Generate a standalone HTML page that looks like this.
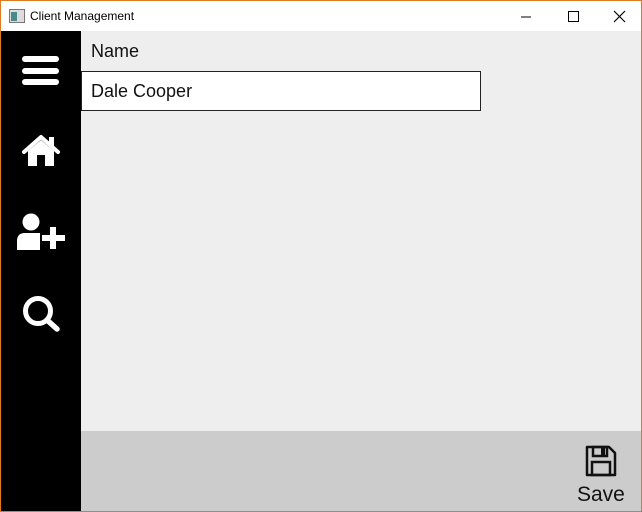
<!DOCTYPE html>
<html><head><style>
html,body{margin:0;padding:0;}
body{width:642px;height:512px;position:relative;overflow:hidden;font-family:"Liberation Sans",sans-serif;background:#eeeeee;}
.win{position:absolute;left:0;top:0;width:640px;height:510px;border:1px solid #e07a1f;}
.title{position:absolute;left:1px;top:1px;width:640px;height:30px;background:#fff;}
.title span{position:absolute;left:29px;top:8px;font-size:12px;color:#000;font-family:"Liberation Sans",sans-serif;}
.side{position:absolute;left:1px;top:31px;width:80px;height:480px;background:#000;}
.bottom{position:absolute;left:81px;top:431px;width:560px;height:80px;background:#cccccc;}
.lbl{position:absolute;left:91px;top:41px;font-size:18px;color:#111;}
.box{position:absolute;left:81px;top:71px;width:398px;height:38px;border:1px solid #222;background:#fff;}
.box span{position:absolute;left:9px;top:9px;font-size:18px;color:#111;}
.save{position:absolute;left:577px;top:483px;font-size:21px;color:#111;}
</style></head><body>
<div class="win"></div>
<div class="title">
<svg style="position:absolute;left:8px;top:8px" width="16" height="14"><rect x="0.5" y="0.5" width="15" height="13" fill="#ddd" stroke="#777"/><rect x="2" y="3" width="6" height="9" fill="#4a8a8a"/></svg>
<span>Client Management</span>
<svg style="position:absolute;left:520px;top:8px" width="110" height="16">
<line x1="0" y1="8" x2="10" y2="8" stroke="#000"/>
<rect x="47.5" y="2.5" width="10" height="10" fill="none" stroke="#000"/>
<path d="M93 2 L104 13 M104 2 L93 13" stroke="#000" stroke-width="1.2"/>
</svg>
</div>
<div class="side">
<svg width="80" height="480" style="position:absolute;left:-1px;top:-31px">
<g fill="#fff">
<rect x="22" y="56" width="37" height="6" rx="3"/>
<rect x="22" y="68" width="37" height="6" rx="3"/>
<rect x="22" y="79" width="37" height="6" rx="3"/>
</g>
<path d="M24 152 L41 137 L58 152" fill="none" stroke="#fff" stroke-width="4" stroke-linecap="round" stroke-linejoin="round"/>
<rect x="49" y="137" width="5" height="10" fill="#fff"/>
<path d="M28 151 L41 140 L54 151 L54 166 L45 166 L45 155 L37 155 L37 166 L28 166 Z" fill="#fff"/>
<circle cx="31" cy="222" r="8.5" fill="#fff"/>
<path d="M17 250 L17 241 Q17 233 25 233 L40 233 Q44 233 45 236 L45 250 Z" fill="#fff"/>
<rect x="40" y="224" width="26" height="27" fill="#000"/>
<rect x="50" y="227" width="6" height="22" fill="#fff"/>
<rect x="42" y="235" width="23" height="6" fill="#fff"/>
<circle cx="38" cy="311" r="12.5" fill="none" stroke="#fff" stroke-width="5"/>
<line x1="47" y1="320" x2="57" y2="329" stroke="#fff" stroke-width="5.5" stroke-linecap="round"/>
</svg>
</div>
<div class="lbl">Name</div>
<div class="box"><span>Dale Cooper</span></div>
<div class="bottom"></div>
<svg style="position:absolute;left:585px;top:445px" width="32" height="32">
<path d="M2 2 H24 L30 8 V30 H2 Z" fill="none" stroke="#111" stroke-width="2.5" stroke-linejoin="round"/>
<rect x="8" y="2" width="14" height="9" fill="none" stroke="#111" stroke-width="2.5"/>
<rect x="16" y="3" width="4" height="7" fill="#111"/>
<rect x="7" y="17" width="18" height="13" fill="none" stroke="#111" stroke-width="2.5"/>
</svg>
<div class="save">Save</div>
</body></html>
